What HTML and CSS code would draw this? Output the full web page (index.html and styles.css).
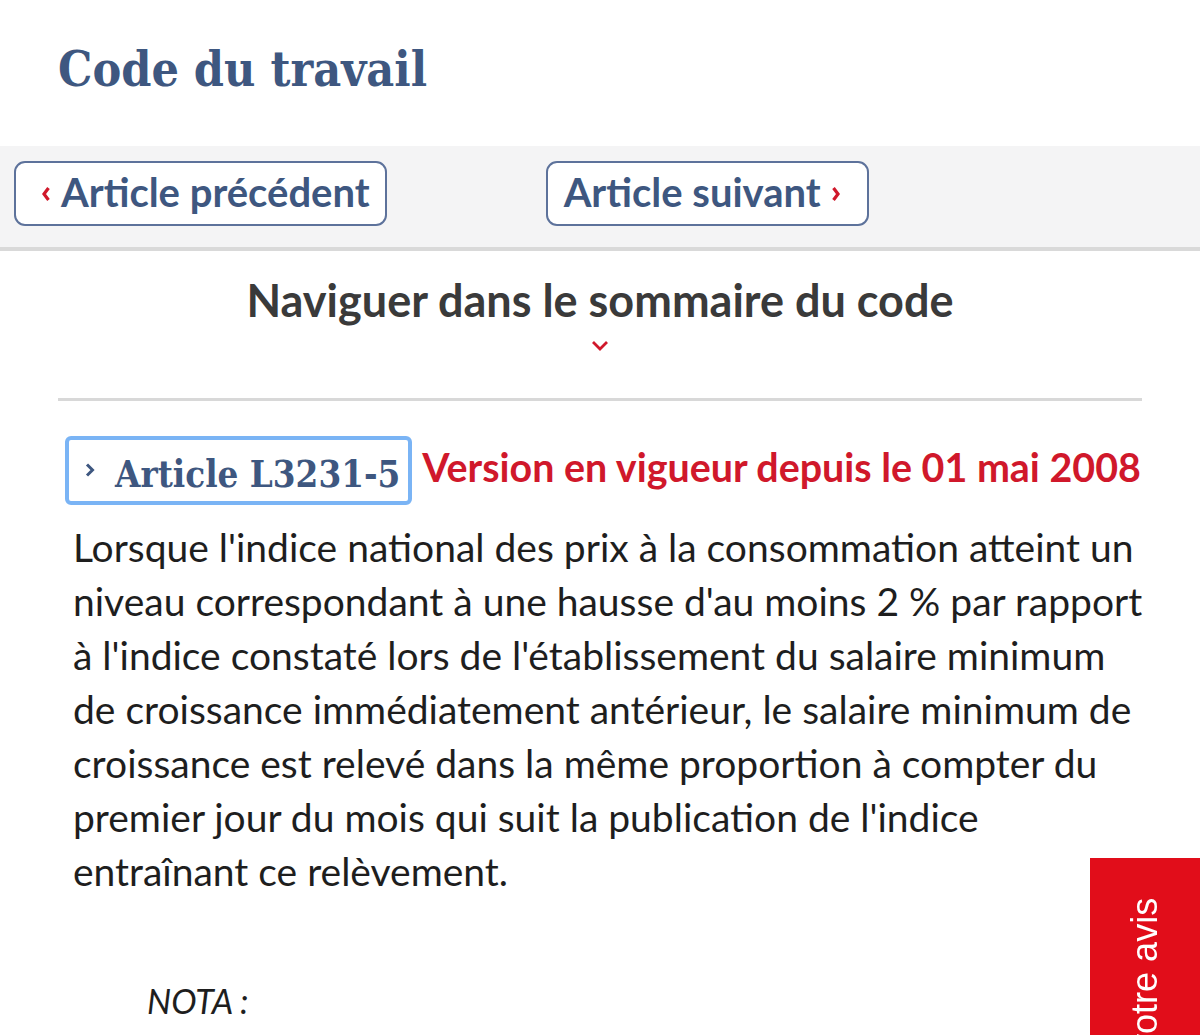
FILE: index.html
```html
<!DOCTYPE html>
<html lang="fr">
<head>
    <meta charset="UTF-8">
    <meta name="viewport" content="width=device-width, initial-scale=1.0">
    <title>Code du travail - Article L3231-5</title>
    <link rel="stylesheet" href="styles.css">
</head>
<body>
    <header class="page-header">
        <h1 class="code-title">Code du travail</h1>
    </header>

    <nav class="article-nav">
        <a href="#" class="nav-button">
            <svg class="nav-arrow" width="10" height="16" viewBox="0 0 10 16">
                <path d="M7.5 2 L3 8 L7.5 14" fill="none" stroke="#d0182b" stroke-width="3.2"/>
            </svg>
            Article précédent
        </a>
        <a href="#" class="nav-button nav-next">
            Article suivant
            <svg class="nav-arrow" width="10" height="16" viewBox="0 0 10 16">
                <path d="M2.5 2 L7 8 L2.5 14" fill="none" stroke="#d0182b" stroke-width="3.2"/>
            </svg>
        </a>
    </nav>

    <section class="summary">
        <div class="summary-title">Naviguer dans le sommaire du code</div>
        <svg class="summary-chevron" width="18" height="12" viewBox="0 0 18 12">
            <path d="M2 2 L9 9 L16 2" fill="none" stroke="#d0182b" stroke-width="2.8"/>
        </svg>
        <hr class="divider">
    </section>

    <article class="article">
        <div class="article-head">
            <a href="#" class="article-name">
                <svg class="article-caret" width="12" height="16" viewBox="0 0 12 16">
                    <path d="M3 2.5 L8.5 8 L3 13.5" fill="none" stroke="#3e5780" stroke-width="3"/>
                </svg>
                Article L3231-5
            </a>
            <span class="article-version">Version en vigueur depuis le 01 mai 2008</span>
        </div>
        <p class="article-text">
            Lorsque l'indice national des prix à la consommation atteint un<br>
            niveau correspondant à une hausse d'au moins 2 % par rapport<br>
            à l'indice constaté lors de l'établissement du salaire minimum<br>
            de croissance immédiatement antérieur, le salaire minimum de<br>
            croissance est relevé dans la même proportion à compter du<br>
            premier jour du mois qui suit la publication de l'indice<br>
            entraînant ce relèvement.
        </p>
        <p class="nota">NOTA :</p>
    </article>

    <a href="#" class="feedback-tab"><span>Donnez votre avis</span></a>
</body>
</html>
```

FILE: styles.css
```css
body {
    margin: 0;
    height: 100vh;
    font-family: 'Lato', 'Noto Sans', sans-serif;
    background-color: #fff;
    color: #1e1e1e;
    overflow: hidden;
}

a {
    text-decoration: none;
}

.page-header {
    height: 146px;
    padding-left: 58px;
    box-sizing: border-box;
}

.code-title {
    margin: 0;
    padding-top: 37px;
    font-family: 'DejaVu Serif Condensed', 'DejaVu Serif', serif;
    font-stretch: condensed;
    font-weight: bold;
    font-size: 48px;
    line-height: 64px;
    color: #3e5780;
}

.article-nav {
    display: flex;
    align-items: flex-start;
    height: 105px;
    padding: 15px 14px 0;
    box-sizing: border-box;
    background-color: #f4f4f5;
    border-bottom: 4px solid #d9d9d9;
}

.nav-button {
    display: flex;
    align-items: center;
    gap: 10px;
    height: 65px;
    box-sizing: border-box;
    padding: 0 15px 3px 25px;
    background-color: #fff;
    border: 2px solid #5d729b;
    border-radius: 11px;
    font-weight: bold;
    font-size: 40px;
    color: #3e5780;
}

.nav-next {
    margin-left: 159px;
    padding: 0 26px 3px 16px;
}

.nav-arrow {
    margin-top: 4px;
}

.summary {
    padding: 22px 58px 0;
    text-align: center;
}

.summary-title {
    font-size: 45px;
    font-weight: bold;
    color: #3a3a3a;
    line-height: 54px;
}

.summary-chevron {
    display: block;
    margin: 13px auto 0;
}

.divider {
    margin: 46px 0 0;
    border: none;
    border-top: 3px solid #d8d8d8;
}

.article {
    padding: 35px 20px 0 65px;
}

.article-head {
    display: flex;
    align-items: center;
}

.article-name {
    display: flex;
    align-items: center;
    flex-shrink: 0;
    height: 69px;
    box-sizing: border-box;
    padding: 8px 8px 0 15px;
    border: 4px solid #7ab4f5;
    border-radius: 6px;
    font-family: 'DejaVu Serif Condensed', 'DejaVu Serif', serif;
    font-stretch: condensed;
    font-weight: bold;
    font-size: 36.4px;
    color: #3e5780;
    white-space: nowrap;
}

.article-caret {
    margin-right: 19px;
    margin-top: -10px;
}

.article-version {
    margin-left: 10px;
    margin-top: -8px;
    font-weight: bold;
    font-size: 39.4px;
    color: #d0182b;
    white-space: nowrap;
}

.article-text {
    margin: 15px 0 0 8px;
    font-size: 39px;
    line-height: 54px;
    color: #1e1e1e;
}

.nota {
    margin: 82px 0 0 82px;
    font-style: italic;
    font-size: 34px;
    line-height: 42px;
    color: #1e1e1e;
}

.feedback-tab {
    position: fixed;
    right: 0;
    bottom: 0;
    width: 110px;
    height: 177px;
    box-sizing: border-box;
    padding-bottom: 40px;
    overflow: hidden;
    background-color: #e10d1a;
    color: #fff;
    font-family: 'Liberation Sans', Arial, sans-serif;
    font-size: 36px;
    writing-mode: vertical-rl;
    transform: rotate(180deg);
    display: flex;
    align-items: center;
    justify-content: flex-end;
}

.feedback-tab span {
    white-space: nowrap;
    flex-shrink: 0;
}
```
